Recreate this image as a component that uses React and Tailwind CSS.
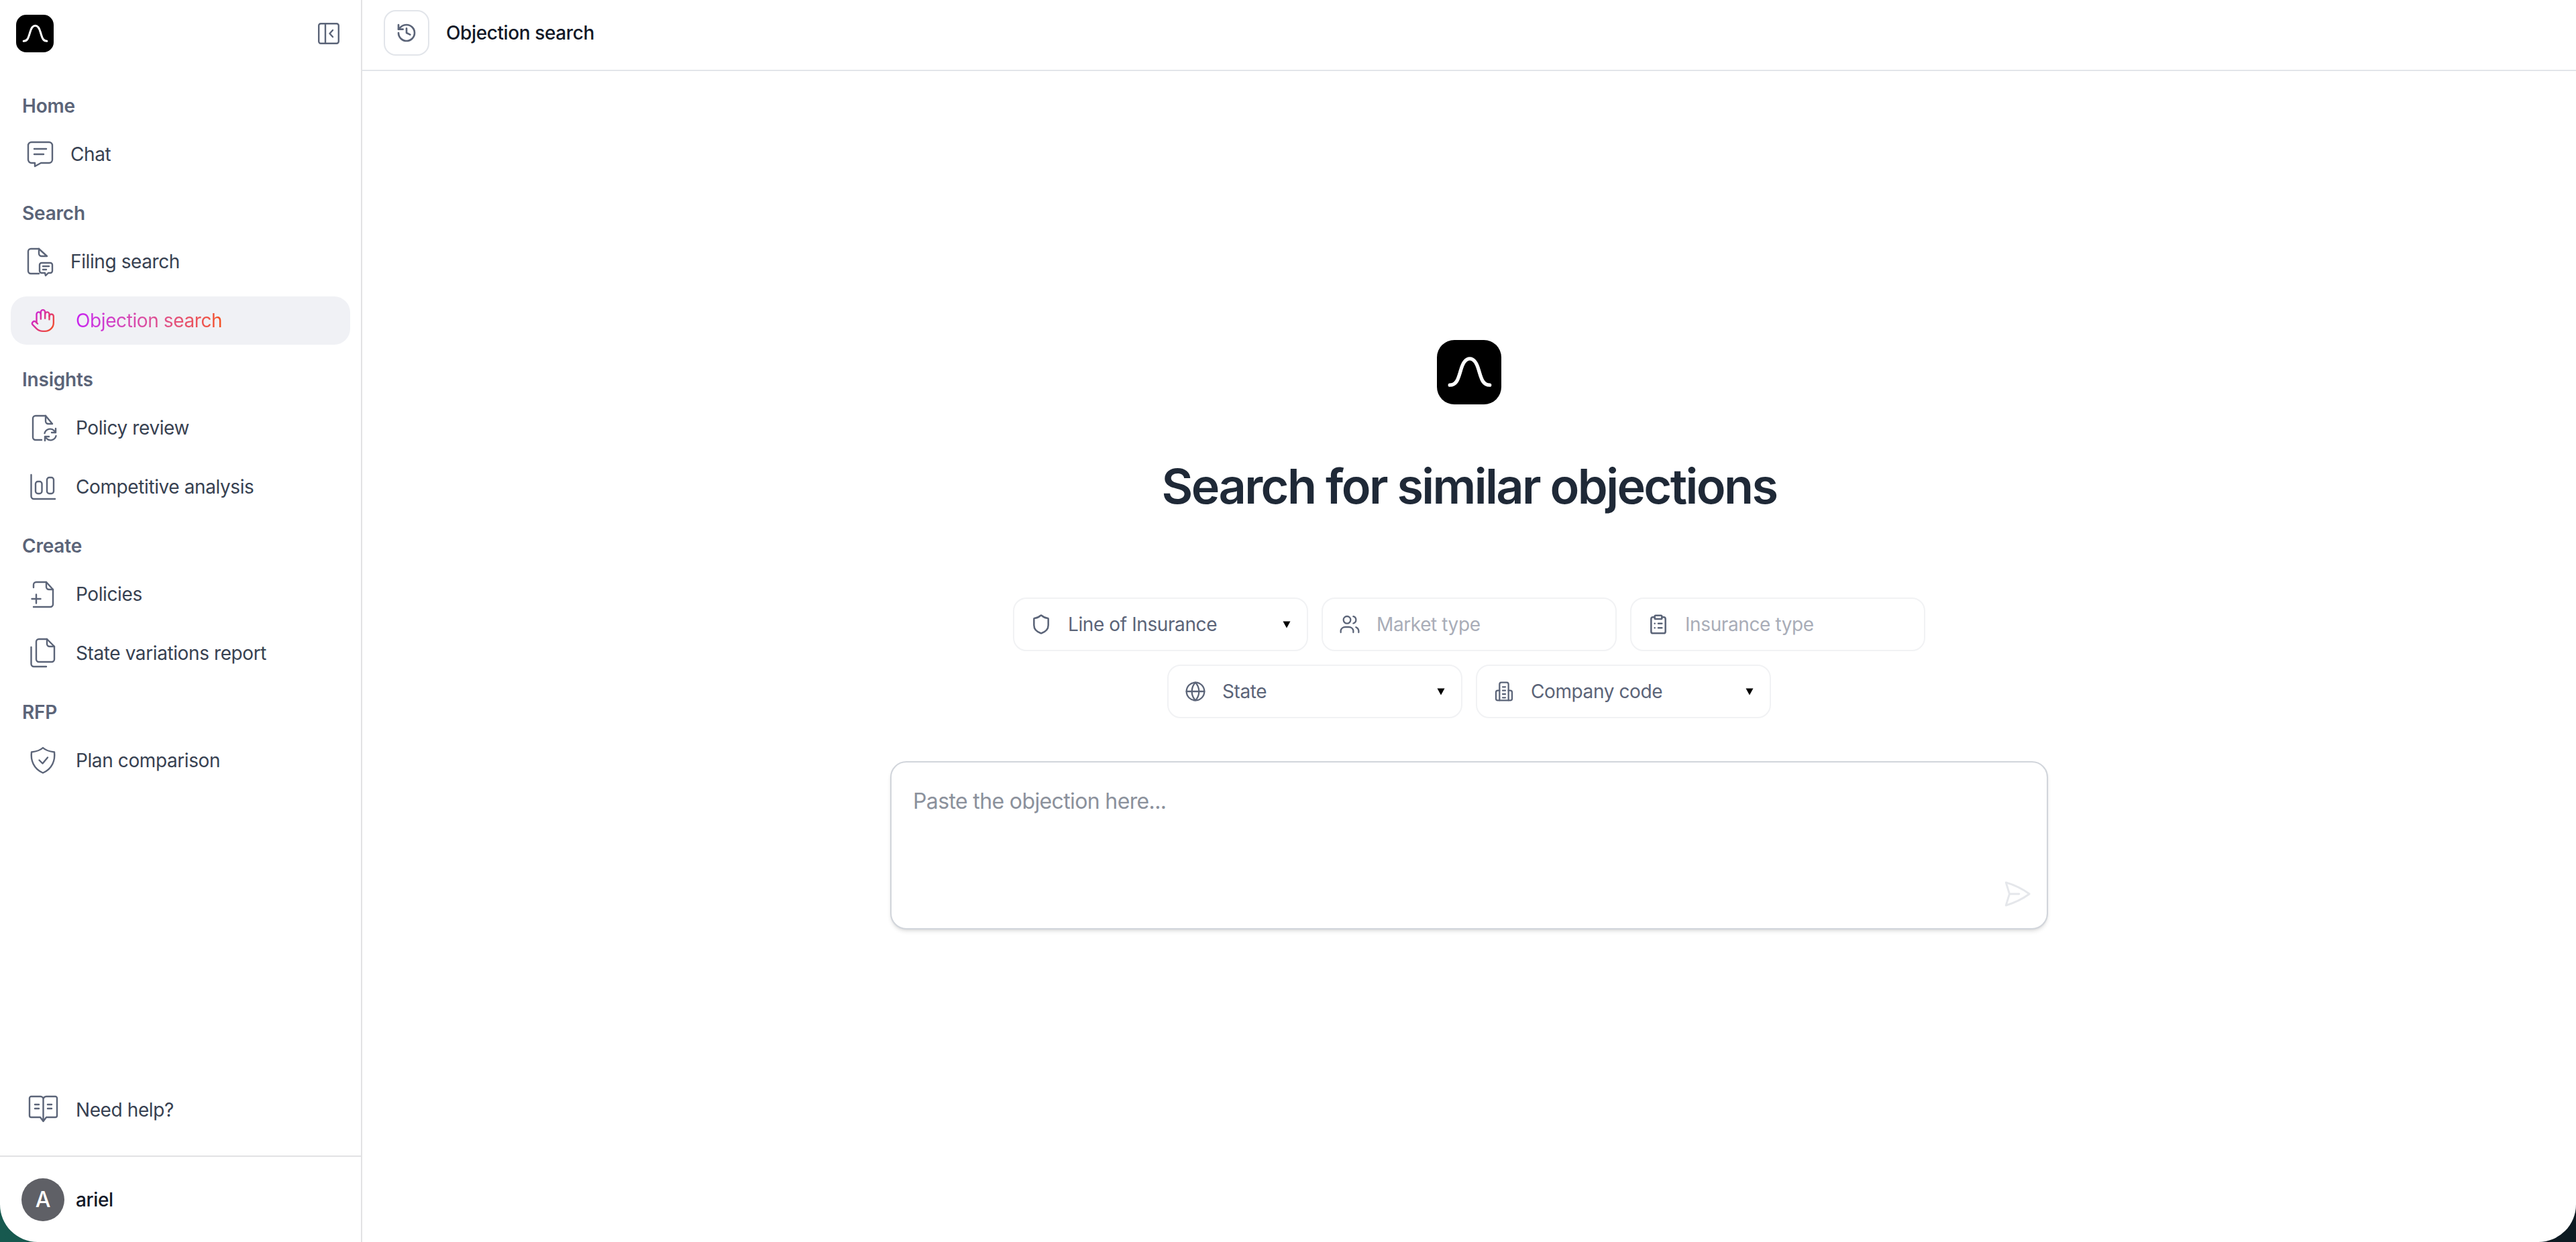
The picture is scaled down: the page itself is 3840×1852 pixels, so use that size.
import React from "react";

const Ic = ({ children, className = "w-[38px] h-[38px]", sw = 2.4, vb = "0 0 38 38" }) => (
  <svg viewBox={vb} fill="none" stroke="currentColor" strokeWidth={sw} strokeLinecap="round" strokeLinejoin="round" className={"shrink-0 overflow-visible " + className}>
    {children}
  </svg>
);

const Logo = ({ className }) => (
  <svg viewBox="0 0 100 100" className={className}>
    <rect width="100" height="100" rx="27" fill="#000" />
    <path d="M20 70C31 70 33 60 37 47C40 36 44 29 51 29C58 29 62 36 65 47C69 60 71 70 82 70" fill="none" stroke="#fff" strokeWidth="5.5" strokeLinecap="round" />
  </svg>
);

const icons = {
  chat: (
    <>
      <path d="M6 1h26a5 5 0 0 1 5 5v21a5 5 0 0 1-5 5H20l-9 5v-5H6a5 5 0 0 1-5-5V6a5 5 0 0 1 5-5z" />
      <path d="M10 11h18M10 19h14" />
    </>
  ),
  filing: (
    <>
      <path d="M17 0H5a4 4 0 0 0-4 4v29a4 4 0 0 0 4 4h12" />
      <path d="M17 0v7a4 4 0 0 0 4 4h8M17 0l12 11" />
      <path d="M21 21h13a3 3 0 0 1 3 3v9a3 3 0 0 1-3 3h-3l-4 4-1-4h-5a3 3 0 0 1-3-3v-9a3 3 0 0 1 3-3z" />
      <path d="M23 26h9M23 31h5" />
    </>
  ),
  review: (
    <>
      <path d="M23 1H8a4 4 0 0 0-4 4v28a4 4 0 0 0 4 4h9" />
      <path d="M23 1v8a4 4 0 0 0 4 4h6M23 1l10 12" />
      <path d="M21.500 27a8.500 8.500 0 0 1 14.500-3.500l2 2.500M38 20v6h-6" />
      <path d="M38.500 31a8.500 8.500 0 0 1-14.500 3.500l-2-2.500M22 38v-6h6" />
    </>
  ),
  bars: (
    <>
      <path d="M1.500 1v32a4 4 0 0 0 4 4H37" />
      <rect x="8" y="11" width="9.500" height="18" rx="3.500" />
      <rect x="25" y="5" width="10" height="24" rx="3.500" />
    </>
  ),
  policies: (
    <>
      <path d="M5 9V5a4 4 0 0 1 4-4h15l10 11v22a4 4 0 0 1-4 4H5" />
      <path d="M24 1v7a4 4 0 0 0 4 4h6" />
      <path d="M2.500 26h13M9 19.500v13" />
    </>
  ),
  state: (
    <>
      <path d="M9 2a4 4 0 0 1 4-4h12l11 11v19a4 4 0 0 1-4 4H13a4 4 0 0 1-4-4z" />
      <path d="M25-2v7a4 4 0 0 0 4 4h7" />
      <path d="M1.500 10v25a4 4 0 0 0 4 4H24" />
    </>
  ),
  plan: (
    <>
      <path d="M19 0c3 3 9 5.500 17 6.500 1.500 12-3 25-17 31C5 31.500.5 18.500 2 6.500 10 5.500 16 3 19 0z" />
      <path d="M13.500 18.500l5 5 7.500-9" />
    </>
  ),
  help: (
    <>
      <path d="M19.500 3c0-2-1.500-4-4-4H1.500A2.500 2.500 0 0 0-1 1.500v26A2.500 2.500 0 0 0 1.500 30H15l4.500 6 4.500-6h13.500a2.500 2.500 0 0 0 2.500-2.500v-26A2.500 2.500 0 0 0 37.500-1H24c-2.500 0-4.500 2-4.500 4v33" />
      <path d="M7 11h6M7 17h6M26 11h6M26 17h6" />
    </>
  ),
};

const Row = ({ icon, label, tight }) => (
  <div className={"h-[72px] flex items-center text-[#374151] " + (tight ? "pl-[25px] gap-[26px]" : "pl-[29px] gap-[30px]")}>
    <span className="text-[#5b6478] flex">
      <Ic>{icons[icon]}</Ic>
    </span>
    <span>{label}</span>
  </div>
);

const Section = ({ children, first }) => (
  <div className={"h-10 pl-[17px] flex items-center font-semibold tracking-[-0.2px] text-[#5b6478] " + (first ? "" : "mt-4")}>{children}</div>
);

const Caret = () => (
  <svg viewBox="0 0 12 11" className="w-3 h-[11px] shrink-0 ml-auto">
    <path d="M0.500 0.500h11L6 10.500z" fill="#000" />
  </svg>
);

const Field = ({ icon, label, select, muted }) => (
  <div className="w-[440px] h-20 rounded-[20px] border-2 border-[#f1f2f4] bg-white flex items-center pl-6 pr-6 gap-[24px]">
    <span className="text-[#5b6478] flex">{icon}</span>
    <span className={muted ? "text-[#a9adb8]" : "text-[#5b6478]"}>{label}</span>
    {select && <Caret />}
  </div>
);

const fi = "w-8 h-8";
const v = "0 0 24 24";

export default function App() {
  return (
    <div className="w-full h-[1852px] bg-gradient-to-r from-[#17594f] via-[#123a44] to-[#0d1a22] overflow-hidden font-['Inter',sans-serif] text-[28px] tracking-[-0.4px]">
      <div className="w-full h-full bg-white rounded-b-[56px] flex overflow-hidden">
        <aside className="w-[540px] shrink-0 border-r-2 border-[#e2e2e4] flex flex-col">
          <div className="h-[138px] pl-6 pr-[32px] pt-[22px] flex items-start justify-between shrink-0">
            <Logo className="w-14 h-14" />
            <span className="text-[#5b6478] mt-3 flex">
              <svg viewBox="0 0 32 32" fill="none" stroke="currentColor" strokeWidth="2.400" strokeLinecap="round" strokeLinejoin="round" className="w-8 h-8">
                <rect x="1.200" y="1.200" width="29.600" height="29.600" rx="3" />
                <path d="M11 1.200v29.600M22 11l-4.500 5 4.500 5" />
              </svg>
            </span>
          </div>
          <nav className="flex flex-col gap-4 px-4 flex-1">
            <Section first>Home</Section>
            <Row icon="chat" label="Chat" tight />
            <Section>Search</Section>
            <Row icon="filing" label="Filing search" tight />
            <div className="h-[72px] rounded-[24px] bg-[#f0f1f5] flex items-center pl-[29px] gap-[30px]">
              <svg viewBox="0 0 24 24" fill="none" stroke="url(#hg)" strokeWidth="1.500" strokeLinecap="round" strokeLinejoin="round" className="w-[38px] h-[38px] shrink-0">
                <defs>
                  <linearGradient id="hg" gradientUnits="userSpaceOnUse" x1="1" y1="4" x2="23" y2="20">
                    <stop offset="0" stopColor="#c81ef0" />
                    <stop offset="1" stopColor="#f4511e" />
                  </linearGradient>
                </defs>
                <path d="M18 11V6a2 2 0 0 0-2-2 2 2 0 0 0-2 2" />
                <path d="M14 10V4a2 2 0 0 0-2-2 2 2 0 0 0-2 2v2" />
                <path d="M10 10.500V6a2 2 0 0 0-2-2 2 2 0 0 0-2 2v8" />
                <path d="M18 8a2 2 0 1 1 4 0v6a8 8 0 0 1-8 8h-2c-2.800 0-4.500-.86-5.990-2.340l-3.600-3.600a2 2 0 0 1 2.830-2.820L7 15" />
              </svg>
              <span className="bg-gradient-to-r from-[#c81ef0] to-[#f4511e] bg-clip-text text-transparent">Objection search</span>
            </div>
            <Section>Insights</Section>
            <Row icon="review" label="Policy review" />
            <Row icon="bars" label="Competitive analysis" />
            <Section>Create</Section>
            <Row icon="policies" label="Policies" />
            <Row icon="state" label="State variations report" />
            <Section>RFP</Section>
            <Row icon="plan" label="Plan comparison" />
            <div className="mt-auto mb-8">
              <Row icon="help" label="Need help?" />
            </div>
          </nav>
          <div className="h-[129px] shrink-0 border-t-2 border-[#e2e2e4] flex items-center pl-8 gap-[17px]">
            <div className="w-16 h-16 rounded-full bg-[#5f6066] text-white font-medium flex items-center justify-center text-[32px]">A</div>
            <span className="text-[#111827] font-medium">ariel</span>
          </div>
        </aside>
        <main className="flex-1 min-w-0 flex flex-col">
          <header className="h-[106px] shrink-0 border-b-2 border-[#e2e5ea] flex items-center pl-[32px] pb-[6px] gap-[25px]">
            <div className="w-[68px] h-[68px] rounded-[18px] border-2 border-[#e2e5ea] flex items-center justify-center text-[#5b6478]">
              <svg viewBox="0 0 24 24" fill="none" stroke="currentColor" strokeWidth="2" strokeLinecap="round" strokeLinejoin="round" className="w-8 h-8">
                <path d="M3 12a9 9 0 1 0 9-9 9.750 9.750 0 0 0-6.740 2.740L3 8" />
                <path d="M3 3v5h5" />
                <path d="M12 7v5l4 2" />
              </svg>
            </div>
            <span className="text-[#111827] font-medium">Objection search</span>
          </header>
          <div className="flex-1 flex flex-col items-center pt-[401px]">
            <Logo className="w-24 h-24" />
            <h1 className="mt-[82px] h-20 leading-[80px] text-[72px] font-semibold tracking-[-2.6px] text-[#1f2937]">Search for similar objections</h1>
            <div className="mt-[126px] flex flex-col items-center gap-5">
              <div className="flex gap-5">
                <Field
                  select
                  label="Line of Insurance"
                  icon={
                    <Ic className={fi} sw={1.900} vb={v}>
                      <path d="M20 13c0 5-3.500 7.500-7.660 8.950a1 1 0 0 1-.67-.01C7.500 20.500 4 18 4 13V6a1 1 0 0 1 1-1c2 0 4.500-1.200 6.240-2.720a1.170 1.170 0 0 1 1.520 0C14.510 3.810 17 5 19 5a1 1 0 0 1 1 1z" />
                    </Ic>
                  }
                />
                <Field
                  muted
                  label="Market type"
                  icon={
                    <Ic className={fi} sw={1.700} vb={v}>
                      <circle cx="9" cy="7" r="4" />
                      <path d="M2 21v-2a5 5 0 0 1 5-4h4a5 5 0 0 1 5 4v2M16 3.130a4 4 0 0 1 0 7.750M22 21v-2a5 5 0 0 0-3-3.870" />
                    </Ic>
                  }
                />
                <Field
                  muted
                  label="Insurance type"
                  icon={
                    <Ic className={fi} sw={1.900} vb={v}>
                      <rect x="8" y="2" width="8" height="4" rx="1" />
                      <path d="M16 4h2a2 2 0 0 1 2 2v14a2 2 0 0 1-2 2H6a2 2 0 0 1-2-2V6a2 2 0 0 1 2-2h2" />
                      <path d="M12 11h4M12 16h4M8 11h.01M8 16h.01" />
                    </Ic>
                  }
                />
              </div>
              <div className="flex gap-5">
                <Field
                  select
                  label="State"
                  icon={
                    <Ic className={fi} sw={1.700} vb={v}>
                      <circle cx="12" cy="12" r="10" />
                      <path d="M2 12h20M12 2a14.500 14.500 0 0 0 0 20 14.500 14.500 0 0 0 0-20" />
                    </Ic>
                  }
                />
                <Field
                  select
                  label="Company code"
                  icon={
                    <Ic className={fi} sw={1.700} vb={v}>
                      <path d="M7 22V4a2 2 0 0 1 2-2h6a2 2 0 0 1 2 2v18" />
                      <path d="M7 11H5a2 2 0 0 0-2 2v7a2 2 0 0 0 2 2h14a2 2 0 0 0 2-2v-7a2 2 0 0 0-2-2h-2" />
                      <path d="M10.500 7h3M10.500 11h3M10.500 15h3M10.500 19h3" />
                    </Ic>
                  }
                />
              </div>
            </div>
            <div className="mt-[64px] w-[1726px] h-[251px] rounded-[24px] border-2 border-[#d1d5db] bg-white shadow-md flex flex-col pl-[32px] pr-[21px]">
              <div className="pt-[40px] text-[32px] leading-[36px] tracking-[-0.63px] text-[#8b919c]">Paste the objection here...</div>
              <div className="mt-auto mb-[28px] flex justify-end text-[#e5e7eb]">
                <svg viewBox="0 0 24 24" fill="none" stroke="currentColor" strokeWidth="1.500" strokeLinecap="round" strokeLinejoin="round" className="w-[46px] h-[46px]">
                  <path d="M6 12 3.269 3.125A59.769 59.769 0 0 1 21.485 12 59.768 59.768 0 0 1 3.270 20.875L5.999 12Zm0 0h7.500" />
                </svg>
              </div>
            </div>
          </div>
        </main>
      </div>
    </div>
  );
}
